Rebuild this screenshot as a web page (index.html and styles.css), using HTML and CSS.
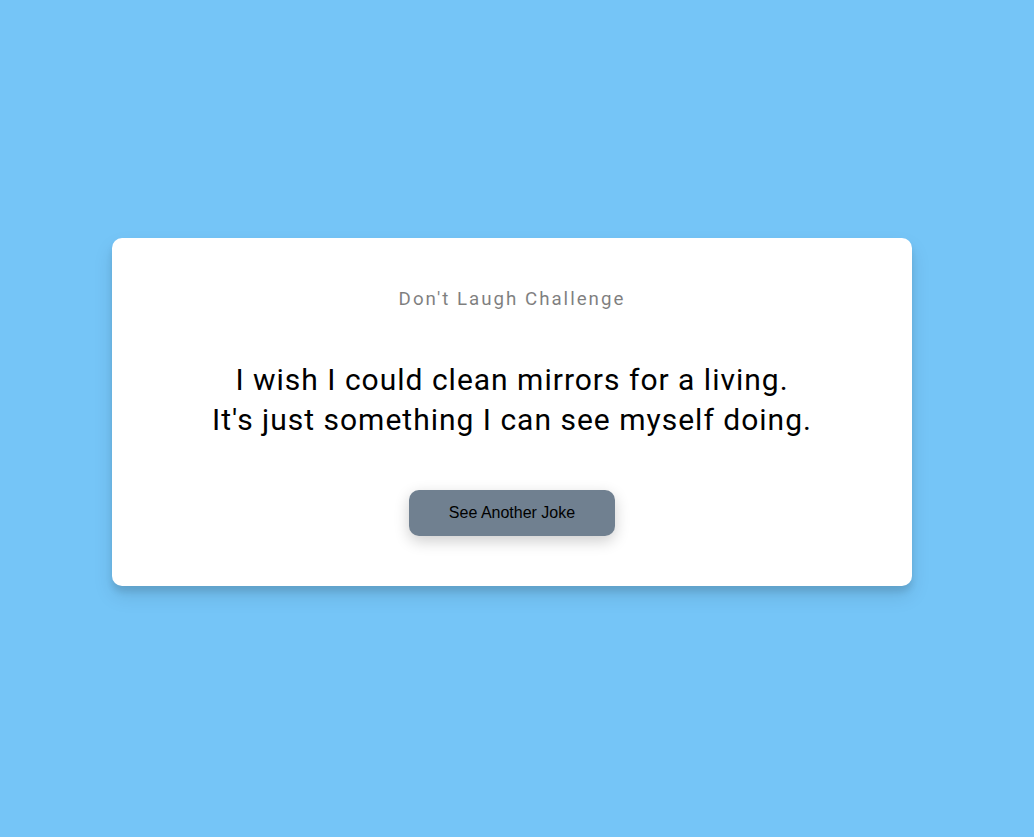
FILE: index.html
```html
<!DOCTYPE html>
<html lang="en">
<head>
<meta charset="UTF-8">
<title>Don't Laugh Challenge</title>
<link rel="stylesheet" href="styles.css">
</head>
<body>
  <div class="container">
    <h3 class="title">Don't Laugh Challenge</h3>
    <div class="joke">I wish I could clean mirrors for a living. It's just something I can see myself doing.</div>
    <button class="btn">See Another Joke</button>
  </div>
</body>
</html>
```

FILE: styles.css
```css
* { box-sizing: border-box; }

body {
  margin: 0;
  padding: 0 10px 13px 0;
  height: 100vh;
  background: #75c5f7;
  font-family: Roboto, "Liberation Sans", sans-serif;
  display: flex;
  align-items: center;
  justify-content: center;
  overflow: hidden;
}

.container {
  width: 800px;
  background: #fff;
  border-radius: 10px;
  box-shadow: 0 10px 20px rgba(0, 0, 0, 0.1), 0 6px 6px rgba(0, 0, 0, 0.1);
  padding: 50px 20px;
  text-align: center;
}

.title {
  margin: 0;
  font-size: 18.72px;
  font-weight: 400;
  letter-spacing: 2px;
  opacity: 0.5;
}

.joke {
  font-size: 30px;
  letter-spacing: 1px;
  line-height: 40px;
  margin: 50px auto;
  max-width: 600px;
}

.btn {
  background: #708090;
  color: #000;
  border: 0;
  border-radius: 10px;
  box-shadow: 0 5px 15px rgba(0, 0, 0, 0.2);
  padding: 14px 40px;
  font-family: "Liberation Sans", Arial, sans-serif;
  font-size: 16px;
  cursor: pointer;
}
```
